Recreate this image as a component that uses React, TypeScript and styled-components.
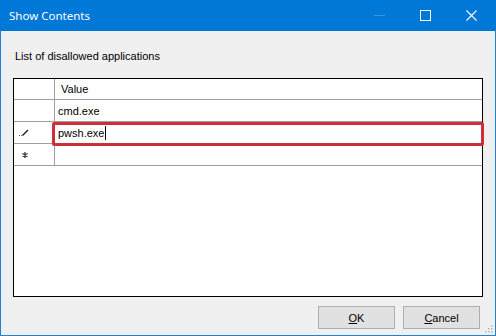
import React from "react";
import styled, { createGlobalStyle } from "styled-components";

const GlobalStyle = createGlobalStyle`
  html, body {
    margin: 0;
    padding: 0;
    background: #f0f0f0;
  }
  * {
    box-sizing: border-box;
  }
`;

const rows = ["cmd.exe", "pwsh.exe", ""];

const App: React.FC = () => {
  return (
    <Window>
      <GlobalStyle />
      <TitleBar>
        <Title>Show Contents</Title>
        <Controls>
          <Control faded>
            <svg width="11" height="11" viewBox="0 0 11 11">
              <line x1="0" y1="5.5" x2="11" y2="5.5" stroke="currentColor" strokeWidth="1" />
            </svg>
          </Control>
          <Control>
            <svg width="11" height="11" viewBox="0 0 11 11">
              <rect x="0.5" y="0.5" width="10" height="10" fill="none" stroke="currentColor" strokeWidth="1" />
            </svg>
          </Control>
          <Control>
            <svg width="11" height="11" viewBox="0 0 11 11">
              <path d="M0.5 0.5 L10.5 10.5 M10.5 0.5 L0.5 10.5" stroke="currentColor" strokeWidth="1.1" />
            </svg>
          </Control>
        </Controls>
      </TitleBar>
      <Body>
        <Label>List of disallowed applications</Label>
        <Grid>
          <Row header>
            <RowHead />
            <HeaderCell>Value</HeaderCell>
          </Row>
          {rows.map((value, i) => (
            <Row key={i}>
              <RowHead>
                {i === 1 && (
                  <svg width="10" height="8" viewBox="0 0 10 8">
                    <rect x="0" y="6" width="1" height="1" fill="#666" />
                    <rect x="2" y="6" width="1" height="1" fill="#666" />
                    <path d="M3.5 6.5 L9 1" stroke="#222" strokeWidth="1.4" />
                  </svg>
                )}
                {i === 2 && (
                  <svg width="6" height="6" viewBox="0 0 6 6" style={{ marginLeft: 3 }}>
                    <path
                      d="M3 0 V6 M0.4 1.5 L5.6 4.5 M5.6 1.5 L0.4 4.5"
                      stroke="#444"
                      strokeWidth="1.4"
                    />
                  </svg>
                )}
              </RowHead>
              <Cell>
                {value}
                {i === 1 && <Caret />}
              </Cell>
            </Row>
          ))}
          <Highlight />
        </Grid>
        <Footer>
          <Button>
            <u>O</u>K
          </Button>
          <Button>
            <u>C</u>ancel
          </Button>
        </Footer>
      </Body>
      <Grip>
        <svg width="8" height="8" viewBox="0 0 8 8">
          <rect x="6" y="0" width="1.5" height="1.5" fill="#b8b8b8" />
          <rect x="3" y="3" width="1.5" height="1.5" fill="#b8b8b8" />
          <rect x="6" y="3" width="1.5" height="1.5" fill="#b8b8b8" />
          <rect x="0" y="6" width="1.5" height="1.5" fill="#b8b8b8" />
          <rect x="3" y="6" width="1.5" height="1.5" fill="#b8b8b8" />
          <rect x="6" y="6" width="1.5" height="1.5" fill="#b8b8b8" />
        </svg>
      </Grip>
    </Window>
  );
};

export default App;

const Window = styled.div`
  position: relative;
  width: 496px;
  height: 336px;
  display: flex;
  flex-direction: column;
  background: #f0f0f0;
  border: 1px solid #1883d7;
  border-top: none;
  font-family: "Liberation Sans", Arial, sans-serif;
  font-size: 11px;
  color: #000;
`;

const TitleBar = styled.div`
  height: 31px;
  margin: 0 -1px;
  background: #0078d7;
  display: flex;
  align-items: center;
  justify-content: space-between;
  padding-left: 9px;
`;

const Title = styled.div`
  font-family: "Noto Sans", "Open Sans", sans-serif;
  font-size: 11.5px;
  color: #fff;
  padding-bottom: 1px;
`;

const Controls = styled.div`
  display: flex;
  height: 100%;
  margin-right: 2px;
`;

const Control = styled.div<{ faded?: boolean }>`
  width: 46px;
  height: 100%;
  display: flex;
  align-items: center;
  justify-content: center;
  color: ${(p) => (p.faded ? "#3a94de" : "#fff")};
`;

const Body = styled.div`
  flex: 1;
  display: flex;
  flex-direction: column;
  padding: 15px 12px 0 12px;
`;

const Label = styled.div`
  padding-left: 2px;
  height: 32px;
  line-height: 21px;
`;

const Grid = styled.div`
  position: relative;
  width: 470px;
  height: 219px;
  background: #fff;
  border: 1px solid #000;
`;

const Row = styled.div<{ header?: boolean }>`
  display: flex;
  height: ${(p) => (p.header ? "21px" : "22px")};
  border-bottom: 1px solid #a0a0a0;
`;

const RowHead = styled.div`
  width: 41px;
  flex-shrink: 0;
  border-right: 1px solid #a0a0a0;
  display: flex;
  align-items: center;
  padding-left: 5px;
  padding-top: 1px;
`;

const HeaderCell = styled.div`
  flex: 1;
  padding-left: 6px;
  display: flex;
  align-items: center;
`;

const Cell = styled.div`
  flex: 1;
  padding-left: 3px;
  display: flex;
  align-items: center;
`;

const Caret = styled.span`
  display: inline-block;
  width: 1px;
  height: 14px;
  background: #000;
  margin-left: 1px;
`;

const Highlight = styled.div`
  position: absolute;
  left: 38px;
  top: 43px;
  width: 432px;
  height: 24px;
  border: 3px solid #cc2f3b;
  border-radius: 2px;
  pointer-events: none;
`;

const Footer = styled.div`
  display: flex;
  justify-content: flex-end;
  gap: 8px;
  padding-top: 9px;
  padding-right: 3px;
`;

const Button = styled.div`
  width: 77px;
  height: 23px;
  background: #e1e1e1;
  border: 1px solid #adadad;
  display: flex;
  align-items: center;
  justify-content: center;
  padding-top: 1px;
`;

const Grip = styled.div`
  position: absolute;
  right: 2px;
  bottom: 2px;
  width: 8px;
  height: 8px;
  display: flex;
`;
